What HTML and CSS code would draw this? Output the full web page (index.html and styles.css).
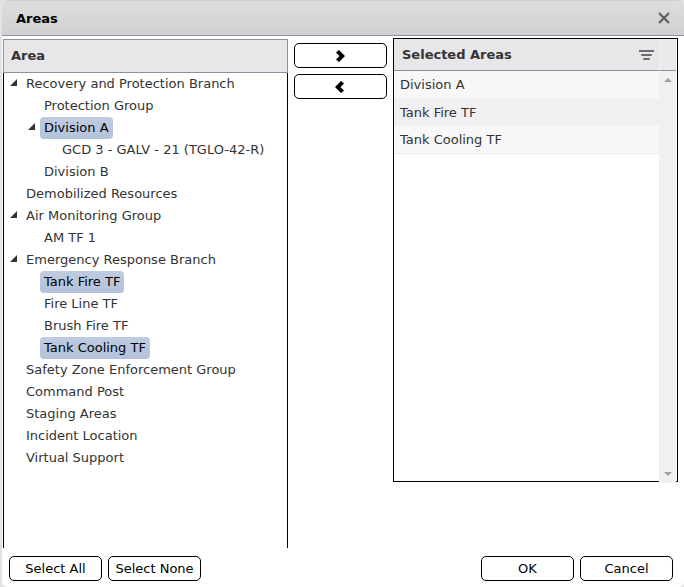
FILE: index.html
```html
<!DOCTYPE html>
<html lang="en">
<head>
  <meta charset="UTF-8">
  <meta name="viewport" content="width=device-width, initial-scale=1.0">
  <title>Areas</title>
  <link rel="stylesheet" href="styles.css">
</head>
<body>
  <div class="dialog" role="dialog" aria-labelledby="dialog-title">
    <header class="titlebar">
      <h1 id="dialog-title">Areas</h1>
      <button class="icon-button" type="button" aria-label="Close">
        <svg width="12" height="12" viewBox="0 0 12 12"><path d="M1 1L11 11M11 1L1 11" stroke="#5f5f5f" stroke-width="2.2"/></svg>
      </button>
    </header>

    <main class="content">
      <section class="tree-panel">
        <h2 class="panel-header">Area</h2>
        <ul class="tree">
          <li>
            <div class="node"><svg class="arrow" viewBox="0 0 7 7"><path d="M7 0V7H0Z"/></svg><span class="label">Recovery and Protection Branch</span></div>
            <ul>
              <li><div class="node"><span class="label">Protection Group</span></div></li>
              <li>
                <div class="node"><svg class="arrow" viewBox="0 0 7 7"><path d="M7 0V7H0Z"/></svg><span class="label selected">Division A</span></div>
                <ul>
                  <li><div class="node"><span class="label">GCD 3 - GALV - 21 (TGLO-42-R)</span></div></li>
                </ul>
              </li>
              <li><div class="node"><span class="label">Division B</span></div></li>
            </ul>
          </li>
          <li><div class="node"><span class="label">Demobilized Resources</span></div></li>
          <li>
            <div class="node"><svg class="arrow" viewBox="0 0 7 7"><path d="M7 0V7H0Z"/></svg><span class="label">Air Monitoring Group</span></div>
            <ul>
              <li><div class="node"><span class="label">AM TF 1</span></div></li>
            </ul>
          </li>
          <li>
            <div class="node"><svg class="arrow" viewBox="0 0 7 7"><path d="M7 0V7H0Z"/></svg><span class="label">Emergency Response Branch</span></div>
            <ul>
              <li><div class="node"><span class="label selected">Tank Fire TF</span></div></li>
              <li><div class="node"><span class="label">Fire Line TF</span></div></li>
              <li><div class="node"><span class="label">Brush Fire TF</span></div></li>
              <li><div class="node"><span class="label selected">Tank Cooling TF</span></div></li>
            </ul>
          </li>
          <li><div class="node"><span class="label">Safety Zone Enforcement Group</span></div></li>
          <li><div class="node"><span class="label">Command Post</span></div></li>
          <li><div class="node"><span class="label">Staging Areas</span></div></li>
          <li><div class="node"><span class="label">Incident Location</span></div></li>
          <li><div class="node"><span class="label">Virtual Support</span></div></li>
        </ul>
      </section>

      <div class="transfer">
        <button class="button" type="button" aria-label="Add">
          <svg width="11" height="12" viewBox="0 0 11 12"><path d="M4 0L10 6L4 12L1 9.5L4.5 6L1 2.5Z"/></svg>
        </button>
        <button class="button" type="button" aria-label="Remove">
          <svg width="11" height="12" viewBox="0 0 11 12"><path d="M6 0L0 6L6 12L9 9.5L5.5 6L9 2.5Z"/></svg>
        </button>
      </div>

      <section class="grid-panel">
        <div class="grid-main">
          <table class="grid">
            <thead>
              <tr>
                <th scope="col">
                  <div class="grid-header">
                    Selected Areas
                    <button class="icon-button" type="button" aria-label="Filter">
                      <svg width="16" height="12" viewBox="0 0 16 12" fill="#6c6c70"><rect x="0" y="1" width="15" height="2"/><rect x="2" y="5" width="11" height="2" rx="1"/><rect x="4" y="9" width="7" height="2" rx="1"/></svg>
                    </button>
                  </div>
                </th>
              </tr>
            </thead>
            <tbody>
              <tr><td>Division A</td></tr>
              <tr><td>Tank Fire TF</td></tr>
              <tr><td>Tank Cooling TF</td></tr>
            </tbody>
          </table>
        </div>
        <div class="scroll">
          <div class="scroll-head"></div>
          <div class="scroll-track">
            <svg width="8" height="4" viewBox="0 0 8 4"><path d="M4 0L8 4H0Z"/></svg>
            <svg width="8" height="4" viewBox="0 0 8 4"><path d="M0 0H8L4 4Z"/></svg>
          </div>
        </div>
      </section>
    </main>

    <footer class="footer">
      <button class="button" type="button">Select All</button>
      <button class="button" type="button">Select None</button>
      <button class="button push" type="button">OK</button>
      <button class="button" type="button">Cancel</button>
    </footer>
  </div>
</body>
</html>
```
FILE: styles.css
```css
* {
  box-sizing: border-box;
}
body {
  margin: 0;
  background: #e3e3e3;
  font-family: Verdana, "DejaVu Sans", sans-serif;
  font-size: 13px;
  color: #333;
}
.dialog {
  display: flex;
  flex-direction: column;
  min-height: 100vh;
  margin-left: 2px;
  background: #fff;
  border-radius: 5px;
  overflow: hidden;
}
.titlebar {
  display: flex;
  align-items: center;
  justify-content: space-between;
  height: 36px;
  padding: 0 14px;
  background: linear-gradient(#dedede, #d0d0d0);
  border-top: 1px solid #d0d0d0;
  border-bottom: 1px solid #8f8fa3;
}
h1 {
  margin: 0;
  font-size: 13px;
  color: #000;
}
.icon-button {
  display: flex;
  padding: 0;
  border: none;
  background: none;
  cursor: pointer;
}
.content {
  display: grid;
  flex: 1;
  grid-template-columns: 1fr 93px 1fr;
  align-items: start;
  gap: 6px;
  padding: 2px 6px 0 1px;
}

/* Area tree */
.tree-panel {
  align-self: stretch;
  display: flex;
  flex-direction: column;
  padding-top: 1px;
}
.panel-header {
  height: 34px;
  margin: 0;
  padding: 0 7px;
  border: 1px solid #8f8f9f;
  background: #e7e7ea;
  font-size: 13px;
  line-height: 32px;
}
.tree {
  flex: 1;
  border: solid #000;
  border-width: 0 1px;
}
.tree,
.tree ul {
  margin: 0;
  padding: 0;
  list-style: none;
}
.tree li {
  padding-left: 18px;
}
.node {
  display: flex;
  height: 22px;
}
.arrow {
  width: 7px;
  height: 7px;
  margin: 6px 5px 0 -12px;
  fill: #333;
}
.label {
  padding: 0 4px;
  border-radius: 4px;
  line-height: 21px;
  white-space: nowrap;
}
.selected {
  background: linear-gradient(#bfcbe0, #b3c2db);
  color: #000;
}

/* Buttons */
.button {
  display: flex;
  align-items: center;
  justify-content: center;
  min-width: 93px;
  height: 25px;
  padding: 0 6px;
  border: 1px solid #000;
  border-radius: 5px;
  background: #fff;
  color: #000;
  font: inherit;
  cursor: pointer;
}
.transfer {
  display: flex;
  flex-direction: column;
  gap: 6px;
  padding-top: 5px;
}
.footer {
  display: flex;
  gap: 6px;
  padding: 8px 11px 6px 7px;
}
.push {
  margin-left: auto;
}

/* Selected areas */
.grid-panel {
  display: flex;
  height: 444px;
  padding-right: 1px;
  border: 1px solid #000;
}
.grid-main {
  flex: 1;
}
.grid {
  width: 100%;
  border-spacing: 0;
}
.grid th {
  height: 32px;
  padding: 0 4px 0 8px;
  border-bottom: 1px solid #8f8f9f;
  background: #e7e7ea;
  text-align: left;
}
.grid-header {
  display: flex;
  align-items: center;
  justify-content: space-between;
}
.grid td {
  height: 27px;
  padding: 0 6px;
  background: #f8f8f8;
}
.grid tr:nth-child(even) td {
  height: 28px;
  background: #f0f0f3;
}
.grid tbody tr:last-child td {
  height: 28px;
  border-bottom: 1px solid #ededed;
}
.scroll {
  display: flex;
  flex-direction: column;
  width: 17px;
}
.scroll-head {
  height: 32px;
  border-left: 1px solid #f2f2f2;
  border-bottom: 1px solid #8f8f9f;
  background: #ebe9ea;
}
.scroll-track {
  display: flex;
  flex: 1;
  flex-direction: column;
  align-items: center;
  justify-content: space-between;
  margin-bottom: -2px;
  padding: 7px 0;
  background: #f0f0f0;
  fill: #a0a0a0;
}
```
